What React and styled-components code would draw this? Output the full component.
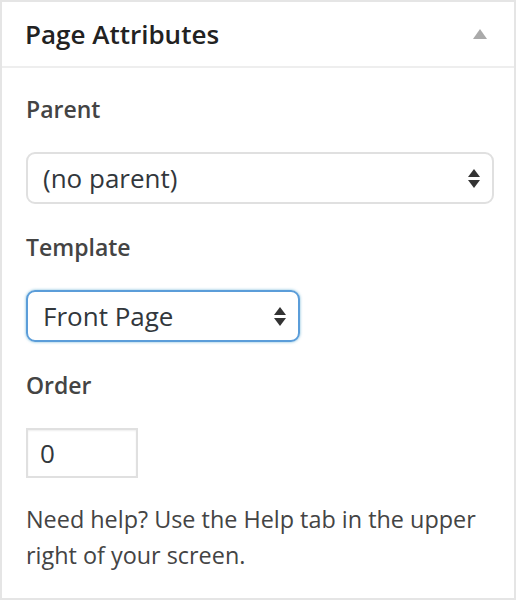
import styled, { createGlobalStyle } from "styled-components";

const Global = createGlobalStyle`
  html, body {
    margin: 0;
    padding: 0;
    background: #fff;
  }
  body {
    font-family: "Open Sans", "Noto Sans", sans-serif;
    color: #444;
  }
`;

const Box = styled.div`
  width: 516px;
  height: 600px;
  box-sizing: border-box;
  border: 2px solid #e5e5e5;
  background: #fff;
`;

const Header = styled.div`
  display: flex;
  align-items: center;
  justify-content: space-between;
  height: 64px;
  padding: 0 27px 0 23px;
  border-bottom: 2px solid #eee;
`;

const Title = styled.h2`
  margin: 0;
  font-size: 26px;
  font-weight: 600;
  color: #222;
`;

const Toggle = styled.span`
  width: 0;
  height: 0;
  border-left: 7px solid transparent;
  border-right: 7px solid transparent;
  border-bottom: 10px solid #aaa;
`;

const Inside = styled.div`
  padding: 24px 22px 0 24px;
`;

const Label = styled.p`
  margin: 0 0 26px;
  font-size: 23px;
  font-weight: 600;
  color: #444;
  line-height: 34px;
`;

const Select = styled.div`
  display: flex;
  align-items: center;
  justify-content: space-between;
  box-sizing: border-box;
  width: ${(p) => p.$width};
  height: 52px;
  padding: 0 12px 0 15px;
  margin-bottom: 26px;
  border: 2px solid ${(p) => (p.$focus ? "#5b9dd9" : "#e0e0e0")};
  border-radius: 9px;
  box-shadow: ${(p) =>
    p.$focus ? "0 0 3px rgba(30, 140, 190, 0.6)" : "none"};
  font-size: 26px;
  color: #32373c;
`;

const Arrows = styled.span`
  display: flex;
  flex-direction: column;
  gap: 3px;
  span {
    width: 0;
    height: 0;
    border-left: 6px solid transparent;
    border-right: 6px solid transparent;
  }
  span:first-child {
    border-bottom: 8px solid #333;
  }
  span:last-child {
    border-top: 8px solid #333;
  }
`;

const NumberInput = styled.div`
  box-sizing: border-box;
  width: 112px;
  height: 50px;
  padding: 0 12px;
  display: flex;
  align-items: center;
  border: 2px solid #e0e0e0;
  box-shadow: inset 0 1px 2px rgba(0, 0, 0, 0.07);
  font-size: 26px;
  color: #32373c;
  margin-bottom: 23px;
`;

const Help = styled.p`
  margin: 0;
  font-size: 23.4px;
  line-height: 36px;
  color: #444;
`;

function SelectBox({ value, width, focus }) {
  return (
    <Select $width={width} $focus={focus}>
      <span>{value}</span>
      <Arrows>
        <span />
        <span />
      </Arrows>
    </Select>
  );
}

export default function App() {
  return (
    <>
      <Global />
      <Box>
        <Header>
          <Title>Page Attributes</Title>
          <Toggle />
        </Header>
        <Inside>
          <Label>Parent</Label>
          <SelectBox value="(no parent)" width="468px" />
          <Label>Template</Label>
          <SelectBox value="Front Page" width="274px" focus />
          <Label>Order</Label>
          <NumberInput>0</NumberInput>
          <Help>Need help? Use the Help tab in the upper right of your screen.</Help>
        </Inside>
      </Box>
    </>
  );
}
